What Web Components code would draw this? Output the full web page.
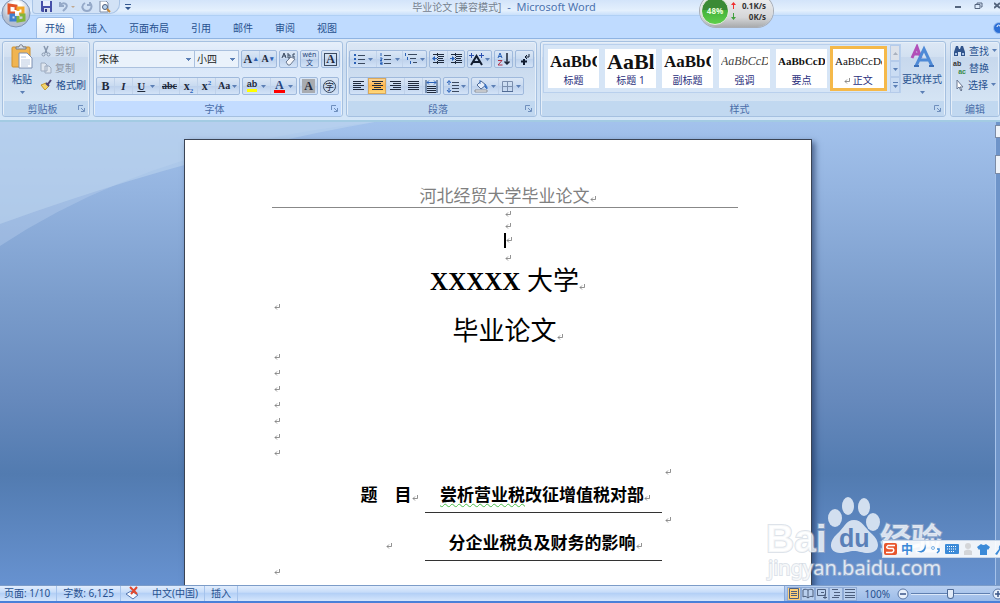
<!DOCTYPE html>
<html lang="zh-CN">
<head>
<meta charset="utf-8">
<title>毕业论文 - Microsoft Word</title>
<style>
	html, body {
		margin: 0;
		height: 100%;
	}

	body {
		overflow: hidden;
		font-family: "Noto Sans", "Noto Sans CJK SC", sans-serif;
		font-size: 10px;
		line-height: 14px;
		color: #27518f;
	}
</style>
</head>
<body>
<word-window></word-window>

<script>
const caret = `<svg class="caret" width="5" height="3" viewBox="0 0 5 3"><path d="M0 0h5L2.5 3z" fill="#5b7fb5"/></svg>`;

/* Line icons share one helper: rows is a list of [x, width] */
function lines(rows, extra = "") {
	let bars = rows.map(([x, w], i) => `<rect x="${x}" y="${1 + i * 2}" width="${w}" height="1"/>`).join("");
	return `<svg width="13" height="12" viewBox="0 0 13 12" fill="#1f2a3c">${bars}${extra}</svg>`;
}

const icons = {
	left: lines([[1, 11], [1, 8], [1, 11], [1, 8], [1, 11]]),
	center: lines([[1, 11], [3, 7], [1, 11], [3, 7], [1, 11]]),
	right: lines([[1, 11], [4, 8], [1, 11], [4, 8], [1, 11]]),
	justify: lines([[1, 11], [1, 11], [1, 11], [1, 11], [1, 11]]),
	spread: `<svg width="13" height="13" viewBox="0 0 13 13"><path d="M1 0v13M12 0v13" stroke="#27456f"/><path d="M2 2.5h9M4 .5l-2 2 2 2M9 .5l2 2-2 2" fill="none" stroke="#2b62b8"/><path d="M2 6.5h9M2 8.5h9M2 10.5h9M2 12.5h9" stroke="#1f2a3c"/></svg>`,
	bullets: `<svg width="13" height="12" viewBox="0 0 13 12"><path d="M5 2.5h7M5 6.5h7M5 10.5h7" stroke="#3b4a60"/><path d="M1 1h2v2H1zM1 5h2v2H1zM1 9h2v2H1z" fill="#2b62b8"/></svg>`,
	numbers: `<svg width="13" height="12" viewBox="0 0 13 12"><path d="M5 2.5h7M5 6.5h7M5 10.5h7" stroke="#3b4a60"/><path d="M2 0v3M1 5h2v1l-2 1.5h2M1 9h2v3H1M1 10.5h2" stroke="#2b62b8" fill="none"/></svg>`,
	multilevel: `<svg width="14" height="12" viewBox="0 0 14 12"><path d="M4 1.5h9M6 5.5h6M9 9.5h4" stroke="#3b4a60"/><path d="M1.5 0v3M3.5 4v3M6.5 8v3" stroke="#2b62b8"/></svg>`,
	outdent: `<svg width="13" height="12" viewBox="0 0 13 12"><path d="M1 1.5h11M6 3.5h6M6 5.5h5M6 7.5h6M1 9.5h11" stroke="#1f2a3c"/><path d="M0 5.5l3-2.500v2h2v1H3v2z" fill="#2b62b8"/><path d="M5.5 0v12" stroke="#1f2a3c" stroke-dasharray="1 1"/></svg>`,
	indent: `<svg width="13" height="12" viewBox="0 0 13 12"><path d="M1 1.5h11M6 3.5h6M6 5.5h5M6 7.5h6M1 9.5h11" stroke="#1f2a3c"/><path d="M5 5.5L2 3v2H0v1h2v2z" fill="#2b62b8"/><path d="M5.5 0v12" stroke="#1f2a3c" stroke-dasharray="1 1"/></svg>`,
	layout: `<svg width="15" height="13" viewBox="0 0 15 13"><path d="M2 12l5.5-9L13 12M4 9h7" fill="none" stroke="#111c30" stroke-width="2"/><path d="M0 2.5h5M2.5 0v5M10 2.5h5M12.5 0v5" stroke="#2b50b0"/></svg>`,
	sort: `<svg width="14" height="14" viewBox="0 0 14 14"><path d="M1 6l2-5 2 5M2 4.5h3" fill="none" stroke="#2b62b8"/><path d="M1 8.5h4l-4 4.5h4.5" fill="none" stroke="#b03048"/><path d="M10 1v11M7.5 9.5L10 12l2.5-2.5" fill="none" stroke="#1b2436" stroke-width="1.5"/></svg>`,
	marks: `<svg width="13" height="13" viewBox="0 0 13 13"><path d="M11 1v3H7M9 2L7 4l2 2" fill="none" stroke="#111c30"/><path d="M6 6v6M3 8.5h6" stroke="#111c30" stroke-width="2"/></svg>`,
	spacing: `<svg width="14" height="13" viewBox="0 0 14 13"><path d="M6 2.5h7M6 5.5h7M6 8.5h7M6 11.5h7" stroke="#3b4a60"/><path d="M3 1v4M3 8v4M1 3l2-2.500L5 3M1 10l2 2.500L5 10" fill="none" stroke="#2b62b8"/></svg>`,
	bucket: `<svg width="14" height="14" viewBox="0 0 14 14"><path d="M1 11h12v2H1z" fill="#fff" stroke="#8b8f96"/><path d="M3 6l4-4 5 4-5 4z" fill="#e6eefa" stroke="#506a94"/><path d="M6 5V1M11 5l2 3v2l-2-2z" fill="#3c74c4" stroke="#3c74c4"/></svg>`,
	border: `<svg width="13" height="13" viewBox="0 0 13 13"><path d="M1.5 1.5h10v10h-10zM6.5 1v11M1 6.5h11" fill="none" stroke="#7b8fae"/><path d="M1 11.5h11" stroke="#506a94"/></svg>`,
	eraser: `<svg width="15" height="14" viewBox="0 0 15 14"><path d="M1 6l2-5 2 5M2 4h3M7 1v5M7 3h2v3H7M14 2h-2v3h2" fill="none" stroke="#39485f"/><path d="M5 10l5-5 4 2-5 6H7z" fill="#f3f5f9" stroke="#6d7c93"/></svg>`,
	highlight: `<svg width="9" height="12" viewBox="0 0 9 12"><path d="M8 1L3 7l-2 1 1-3" fill="none" stroke="#6d7c93" stroke-width="2"/></svg>`,
	scissors: `<svg width="12" height="12" viewBox="0 0 12 12"><path d="M4 1l3 7M8 1L5 8" stroke="#8797ad" stroke-width="1.5"/><circle cx="3.5" cy="9.5" r="1.5" fill="none" stroke="#8797ad"/><circle cx="8.5" cy="9.5" r="1.5" fill="none" stroke="#8797ad"/></svg>`,
	copy: `<svg width="12" height="12" viewBox="0 0 12 12"><path d="M1 1h4l2 2v6H1zM5 4h4l2 2v5H5z" fill="#dfe6ef" stroke="#9dabc0"/></svg>`,
	brush: `<svg width="13" height="12" viewBox="0 0 13 12"><path d="M1 6l5-2 3 3-4 4z" fill="#f2d36a" stroke="#c69a2e"/><path d="M6 4l3 3M8 5l3-4" stroke="#4c4376" stroke-width="2"/></svg>`,
	binoculars: `<svg width="13" height="12" viewBox="0 0 13 12"><path d="M3 1h2l1 3h1l1-3h2l2 6v4H8V7H5v4H1V7z" fill="#31548c"/><path d="M2 8h2v2H2zM9 8h2v2H9z" fill="#a9c3e8"/></svg>`,
	pointer: `<svg width="12" height="12" viewBox="0 0 12 12"><path d="M4 1v9l2-2 2 4 1-1-2-3h3z" fill="#fff" stroke="#6a7892"/></svg>`,
	paste: `<svg width="22" height="26" viewBox="0 0 22 26"><rect x="1" y="3" width="18" height="20" rx="1" fill="#f0b450" stroke="#d0902c"/><path d="M5 5V3h3c0-3 4-3 4 0h3v2z" fill="#d8dde5" stroke="#727c8c"/><path d="M8 9h8l5 5v10H8z" fill="#fff" stroke="#7d90b2"/><path d="M10 13h5M10 16h9M10 18h9M10 20h9M10 22h7" stroke="#b8c8e0"/></svg>`,
	change: `<svg width="24" height="24" viewBox="0 0 24 24"><path d="M2 14L7 3l4 11M3 10h7" fill="none" stroke="#b14fb8" stroke-width="3"/><path d="M6 22l8-17 8 17M9 16h10" fill="none" stroke="#4f8ad6" stroke-width="3"/><path d="M4 22h5M19 22h5" stroke="#3c6fb8" stroke-width="2"/></svg>`
};

/* Attach an open shadow root filled from a template */
function fill(host, html) {
	let template = document.createElement("template");
	template.innerHTML = html;
	host.attachShadow({ mode: "open" });
	host.shadowRoot.appendChild(template.content.cloneNode(true));
}

class ToolButton extends HTMLElement {
	constructor() {
		super();
		let icon = icons[this.getAttribute("icon")] || "";
		let drop = this.hasAttribute("drop") ? caret : "";
		fill(this, `
			<style>
				:host {
					display: flex;
					flex: none;
				}

				button {
					display: flex;
					flex: 1;
					align-items: center;
					justify-content: space-evenly;
					min-width: 0;
					padding: 0;
					border: none;
					background: none;
					color: #1f2a3c;
					font: bold 12px/14px "Liberation Serif", "Noto Sans CJK SC", serif;
				}

				:host([active]) button {
					background: linear-gradient(#fbd9a0, #fdb44b 50%, #ffdf83);
					box-shadow: inset 0 0 0 1px #d9a85b;
				}
			</style>
			<button type="button">${icon}<slot></slot>${drop}</button>
		`);
		this.style.width = this.getAttribute("w") + "px";
	}
}

/* Bordered strip that holds a run of tool buttons */
class ButtonSet extends HTMLElement {
	constructor() {
		super();
		fill(this, `
			<style>
				:host {
					display: flex;
					flex: none;
					height: 16px;
					border: 1px solid #9fb9dc;
					border-radius: 2px;
					background: linear-gradient(#dbe7f6, #c8daf0 50%, #bdd1ec 51%, #d3e3f7);
				}

				::slotted(tool-button:not(:first-child)) {
					border-left: 1px solid #c0d2ea;
					box-sizing: border-box;
				}
			</style>
			<slot></slot>
		`);
	}
}

/* Icon and caption side by side, used in the narrow columns */
class LabelButton extends HTMLElement {
	constructor() {
		super();
		let drop = this.hasAttribute("drop") ? caret : "";
		let icon = icons[this.getAttribute("icon")] || `<span class="swap">ab<i>ac</i></span>`;
		fill(this, `
			<style>
				:host {
					display: block;
				}

				button {
					display: flex;
					align-items: center;
					gap: 3px;
					height: 17px;
					padding: 0;
					border: none;
					background: none;
					color: #27518f;
					font: inherit;
					white-space: nowrap;
				}

				:host([off]) button {
					color: #8d96a5;
				}

				.swap {
					width: 13px;
					font: bold 7px/8px "Liberation Sans", sans-serif;
					color: #333;
					text-align: left;
				}

				.swap i {
					display: block;
					font-style: normal;
					text-align: right;
					color: #3a8a4a;
				}
			</style>
			<button type="button">${icon}<slot></slot>${drop}</button>
		`);
	}
}

/* Large button: picture, caption, arrow */
class BigButton extends HTMLElement {
	constructor() {
		super();
		fill(this, `
			<style>
				:host {
					display: block;
				}

				button {
					display: flex;
					flex-direction: column;
					align-items: center;
					height: 52px;
					padding: 0;
					border: none;
					background: none;
					color: #27518f;
					font: inherit;
					white-space: nowrap;
				}

				.picture {
					display: flex;
					height: 26px;
				}

				.text {
					margin: 2px 0 5px;
				}
			</style>
			<button type="button">
				<span class="picture">${icons[this.getAttribute("icon")]}</span>
				<span class="text"><slot></slot></span>
				${caret}
			</button>
		`);
	}
}

class RibbonGroup extends HTMLElement {
	constructor() {
		super();
		let launcher = this.hasAttribute("launcher")
			? `<svg width="7" height="7" viewBox="0 0 7 7"><path d="M.5 5V.5H5M3 3l3 3M6.5 3v3.5H3" fill="none" stroke="#6f8fbd"/></svg>` : "";
		fill(this, `
			<style>
				:host {
					display: flex;
					flex-direction: column;
					flex: none;
					box-sizing: border-box;
					border: 1px solid #a5c0e0;
					border-radius: 3px;
					background: linear-gradient(#dde8f5, #d2e0f1 20%, #c7d8ed 21%, #d9e8f6);
					box-shadow: inset 0 0 0 1px #e6eff9;
				}

				:host([light]) {
					background: linear-gradient(#e6effb, #d9e6f7 20%, #d8e6f8 21%, #e4f0fd);
				}

				.body {
					flex: 1;
					display: flex;
					padding: 0 2px;
				}

				footer {
					display: flex;
					align-items: center;
					height: 15px;
					margin: 0 1px;
					padding: 0 3px;
					background: #c1d8f0;
					color: #4a6ea9;
				}

				:host([light]) footer {
					background: #c3dcff;
				}

				footer span {
					flex: 1;
					text-align: center;
				}
			</style>
			<div class="body"><slot></slot></div>
			<footer><span>${this.getAttribute("label")}</span>${launcher}</footer>
		`);
	}
}

class StyleTile extends HTMLElement {
	constructor() {
		super();
		fill(this, `
			<style>
				:host {
					display: block;
					flex: 0 0 51px;
					min-width: 0;
				}

				button {
					display: flex;
					flex-direction: column;
					width: 100%;
					height: 39px;
					padding: 0 2px;
					border: none;
					background: #fff;
					color: #2b2f7c;
					font: inherit;
				}

				:host([chosen]) button {
					outline: 3px solid #f5b94a;
				}

				.sample {
					width: 100%;
					height: 25px;
					overflow: hidden;
					white-space: nowrap;
					text-align: left;
					color: #111;
					line-height: 25px;
				}

				.name {
					width: 100%;
					text-align: center;
					line-height: 12px;
				}
			</style>
			<button type="button">
				<span class="sample"><slot name="sample"></slot></span>
				<span class="name"><slot></slot></span>
			</button>
		`);
	}
}

class TitleBar extends HTMLElement {
	constructor() {
		super();
		fill(this, `
			<style>
				:host {
					display: flex;
					position: relative;
					height: 16px;
					padding-left: 8px;
					background: linear-gradient(#d3e4fa, #e4f0fd 70%, #c9e0fb);
					border-bottom: 1px solid #b0d0f5;
					box-sizing: border-box;
				}

				.side {
					flex: 1;
					display: flex;
				}

				h1 {
					margin: 0;
					font-size: 11px;
					font-weight: normal;
					line-height: 13px;
					color: #4d74b0;
				}

				h1 span {
					font-size: 10px;
					color: #75818f;
				}

				.quick {
					display: flex;
					align-items: center;
					gap: 5px;
					height: 13px;
					margin-left: 24px;
					padding: 0 8px 0 7px;
					border: 1px solid #a9c4e6;
					border-top: none;
					border-radius: 0 0 10px 4px;
					background: #d2e2f6;
				}

				button {
					display: flex;
					padding: 0;
					border: none;
					background: none;
				}

				.more {
					margin: 4px 0 0 5px;
					height: 6px;
				}

				.window {
					justify-content: flex-end;
					gap: 11px;
				}

				/* The round menu button hangs over the tab row */
				.office {
					position: absolute;
					left: 1px;
					top: -2px;
				}
			</style>
			<div class="side">
				<div class="quick">
					<button type="button" aria-label="保存"><svg width="13" height="12" viewBox="0 0 13 12"><path d="M1 0h11v11H2L1 10z" fill="#4650a8"/><path d="M3 0h7v5H3z" fill="#e9effb"/><path d="M4 7h6v4H4z" fill="#d5dcec"/><path d="M5 8h2v3H5z" fill="#333c80"/></svg></button>
					<button type="button" aria-label="撤消"><svg width="18" height="12" viewBox="0 0 18 12"><path d="M2 1v4h4M2 5c3-5 9-2 6 2L5 10" fill="none" stroke="#95a9c8" stroke-width="2"/><path d="M13 5h4l-2 2z" fill="#c0a890"/></svg></button>
					<button type="button" aria-label="重复"><svg width="12" height="12" viewBox="0 0 12 12"><path d="M4 2c-5 3-2 8 2 8s6-5 3-8M9 1v3H6" fill="none" stroke="#95a9c8" stroke-width="2"/></svg></button>
					<button type="button" aria-label="打印预览"><svg width="13" height="12" viewBox="0 0 13 12"><path d="M2 0h6l2 2v9H2z" fill="#fff" stroke="#7c8da8"/><circle cx="7" cy="6" r="2.5" fill="#b8d4f0" stroke="#4e5f7c"/><path d="M9 8l3 3" stroke="#c48a3c" stroke-width="2"/></svg></button>
				</div>
				<button type="button" class="more" aria-label="自定义"><svg width="6" height="6" viewBox="0 0 6 6"><path d="M0 0h6v1H0zM0 3h6L3 6z" fill="#35588f"/></svg></button>
			</div>
			<h1><span>毕业论文 [兼容模式]</span> &nbsp;-&nbsp; Microsoft Word</h1>
			<div class="side window">
				<button type="button" aria-label="最小化"><svg width="9" height="12" viewBox="0 0 9 12"><path d="M1 7h6" stroke="#54657e" stroke-width="2"/></svg></button>
				<button type="button" aria-label="还原"><svg width="9" height="12" viewBox="0 0 9 12"><path d="M3 5V3h5v4H7M1 4.5h5v4H1z" fill="none" stroke="#54657e"/></svg></button>
				<button type="button" aria-label="关闭"><svg width="6" height="12" viewBox="0 0 6 12"><path d="M0 3l6 5M0 8l6-5" stroke="#54657e" stroke-width="2"/></svg></button>
			</div>
			<button type="button" class="office" aria-label="Office 按钮">
				<svg width="30" height="30" viewBox="0 0 30 30">
					<defs><radialGradient id="g" cy=".3"><stop offset=".4" stop-color="#fff"/><stop offset="1" stop-color="#b5bfd0"/></radialGradient></defs>
					<circle cx="15" cy="15" r="14" fill="url(#g)" stroke="#7d93b5"/>
					<g fill="none" stroke-width="3">
						<path d="M15 12V8l-7-1v8h6" stroke="#e2562a"/>
						<path d="M17 13v-3h5v6h-4" stroke="#f2a728"/>
						<path d="M14 17h-4v5h5v-4" stroke="#3f7fd0"/>
						<path d="M17 18v5l6-1v-5h-4" stroke="#83b53c"/>
					</g>
				</svg>
			</button>
		`);
	}
}

class TabBar extends HTMLElement {
	constructor() {
		super();
		let names = ["开始", "插入", "页面布局", "引用", "邮件", "审阅", "视图"];
		fill(this, `
			<style>
				:host {
					display: flex;
					align-items: flex-end;
					gap: 6px;
					height: 22px;
					padding-left: 37px;
					background: #bfdbff;
				}

				button {
					height: 20px;
					padding: 0 8px;
					border: none;
					background: none;
					color: #27518f;
					font: inherit;
				}

				.on {
					border-radius: 3px 3px 0 0;
					background: linear-gradient(#fff, #e4eefb);
					box-shadow: 0 0 0 1px #9cbce6;
					clip-path: inset(-1px -1px 0);
				}

				.help {
					display: flex;
					align-items: center;
					width: 7px;
					margin-left: auto;
					padding: 0;
				}
			</style>
			${names.map((name, i) => `<button type="button" class="${i ? "" : "on"}">${name}</button>`).join("")}
			<button type="button" class="help" aria-label="帮助"><svg width="7" height="12" viewBox="0 0 7 12"><circle cx="6" cy="6" r="5.5" fill="#2c6fd6" stroke="#9dc0f0"/><path d="M4 5c0-3 4-2 3 0" fill="none" stroke="#fff"/></svg></button>
		`);
	}
}

class RibbonPanel extends HTMLElement {
	constructor() {
		super();
		fill(this, `
			<style>
				:host {
					display: flex;
					gap: 3px;
					height: 84px;
					padding: 2px 0 3px 2px;
					box-sizing: border-box;
					border-top: 1px solid #8fb4e3;
					border-bottom: 2px solid #a3cbe3;
					background: linear-gradient(#dce8f6, #cadbef 30%, #d4e6f8);
					overflow: hidden;
				}

				.rows {
					display: flex;
					flex-direction: column;
					gap: 9px;
					padding-top: 8px;
				}

				.row {
					display: flex;
					gap: 2px;
				}

				.combos {
					display: flex;
				}

				select {
					appearance: none;
					height: 18px;
					padding: 0 2px;
					border: 1px solid #abc1de;
					border-radius: 0;
					background: #eaf2fb conic-gradient(from -45deg at 50% 100%, #5b7fb5 90deg, transparent 0) no-repeat right 3px center / 5px 3px;
					color: #222;
					font: inherit;
				}

				.face {
					width: 99px;
				}

				.size {
					width: 44px;
					border-left: none;
				}

				.clip {
					display: flex;
					gap: 7px;
					width: 82px;
				}

				.column {
					display: flex;
					flex-direction: column;
				}

				.big {
					padding: 2px 0 0 6px;
				}

				.grow {
					flex: 1;
					min-width: 404px;
				}

				.edit {
					margin-left: 1px;
				}

				.gallery {
					display: flex;
					gap: 6px;
					height: 39px;
					margin-top: 2px;
					padding: 4px 0 4px 4px;
					border: 1px solid #b9d0ed;
					background: #d6e5f6;
				}

				.scroll {
					display: flex;
					flex-direction: column;
					margin-top: -4px;
				}

				.scroll button {
					display: flex;
					align-items: center;
					justify-content: center;
					flex: none;
					box-sizing: border-box;
					width: 10px;
					height: 16px;
					padding: 0;
					border: 1px solid #b5cbea;
					background: #cadcf3;
				}

				.scroll button:first-child {
					background: #dde2ea;
				}

				.change {
					flex: none;
					margin: auto;
					padding-bottom: 4px;
				}

				u, s, i {
					font-size: 11px;
				}

				s {
					font-size: 10px;
				}

				sub, sup {
					font-size: 7px;
					line-height: 0;
					color: #2b62b8;
				}

				.lit {
					border-bottom: 3px solid #ff0;
					font: bold 9px/9px "Liberation Sans", sans-serif;
				}

				.ink {
					border-bottom: 3px solid #f00;
					line-height: 10px;
					padding: 0 1px;
					color: #27457c;
				}

				.small {
					font-size: 10px;
				}

				.boxed {
					border: 1px solid #3b4a60;
					padding: 0 1px;
					line-height: 11px;
				}

				.shaded {
					background: #a8abb0;
					padding: 0 2px;
					line-height: 14px;
				}

				.ring {
					width: 11px;
					border: 1px solid #39485f;
					border-radius: 50%;
					font: 9px/11px "Noto Sans CJK SC", sans-serif;
				}

				.pinyin {
					font: 7px/8px "Noto Sans", "Noto Sans CJK SC", sans-serif;
					color: #27457c;
				}

				.s17 { font: bold 17px/25px "Liberation Serif", serif; }
				.s22 { font: bold 22px/25px "Liberation Serif", serif; }
				.s12 { font: italic 12px/25px "Liberation Serif", serif; color: #444; }
				.s11 { font: bold 11px/25px "Liberation Serif", serif; }
				.s11n { font: 11px/25px "Liberation Serif", serif; }
			</style>
			<ribbon-group label="剪贴板" launcher>
				<div class="clip">
					<big-button class="big" icon="paste">粘贴</big-button>
					<div class="column">
						<label-button icon="scissors" off>剪切</label-button>
						<label-button icon="copy" off>复制</label-button>
						<label-button icon="brush">格式刷</label-button>
					</div>
				</div>
			</ribbon-group>

			<ribbon-group label="字体" launcher light>
				<div class="rows">
					<div class="row">
						<div class="combos">
							<select class="face" aria-label="字体"><option>宋体</option></select>
							<select class="size" aria-label="字号"><option>小四</option></select>
						</div>
						<button-set>
							<tool-button w="17">A<sup>▴</sup></tool-button>
							<tool-button w="17"><span class="small">A</span><sup>▾</sup></tool-button>
						</button-set>
						<button-set><tool-button w="17" icon="eraser"></tool-button></button-set>
						<button-set><tool-button w="17"><span class="pinyin">wén<br>文</span></tool-button></button-set>
						<button-set><tool-button w="17"><span class="boxed">A</span></tool-button></button-set>
					</div>
					<div class="row">
						<button-set>
							<tool-button w="17">B</tool-button>
							<tool-button w="18"><i>I</i></tool-button>
							<tool-button w="27" drop><u>U</u></tool-button>
							<tool-button w="20"><s>abc</s></tool-button>
							<tool-button w="18"><span>x<sub>2</sub></span></tool-button>
							<tool-button w="18"><span>x<sup>2</sup></span></tool-button>
							<tool-button w="24" drop><span class="small">Aa</span></tool-button>
						</button-set>
						<button-set>
							<tool-button w="27" drop><span class="lit">ab</span></tool-button>
							<tool-button w="26" drop><span class="ink">A</span></tool-button>
						</button-set>
						<button-set><tool-button w="17"><span class="shaded">A</span></tool-button></button-set>
						<button-set><tool-button w="17"><span class="ring">字</span></tool-button></button-set>
					</div>
				</div>
			</ribbon-group>

			<ribbon-group label="段落" launcher>
				<div class="rows">
					<div class="row">
						<button-set>
							<tool-button w="26" icon="bullets" drop></tool-button>
							<tool-button w="26" icon="numbers" drop></tool-button>
							<tool-button w="24" icon="multilevel" drop></tool-button>
						</button-set>
						<button-set>
							<tool-button w="17" icon="outdent"></tool-button>
							<tool-button w="17" icon="indent"></tool-button>
						</button-set>
						<button-set><tool-button w="23" icon="layout" drop></tool-button></button-set>
						<button-set><tool-button w="17" icon="sort"></tool-button></button-set>
						<button-set><tool-button w="17" icon="marks"></tool-button></button-set>
					</div>
					<div class="row">
						<button-set>
							<tool-button w="17" icon="left"></tool-button>
							<tool-button w="19" icon="center" active></tool-button>
							<tool-button w="18" icon="right"></tool-button>
							<tool-button w="18" icon="justify"></tool-button>
							<tool-button w="18" icon="spread"></tool-button>
						</button-set>
						<button-set><tool-button w="24" icon="spacing" drop></tool-button></button-set>
						<button-set>
							<tool-button w="26" icon="bucket" drop></tool-button>
							<tool-button w="25" icon="border" drop></tool-button>
						</button-set>
					</div>
				</div>
			</ribbon-group>

			<ribbon-group class="grow" label="样式" launcher>
				<div class="gallery">
					<style-tile><span slot="sample" class="s17">AaBbC</span>标题</style-tile>
					<style-tile><span slot="sample" class="s22">AaBl</span>标题 1</style-tile>
					<style-tile><span slot="sample" class="s17">AaBbC</span>副标题</style-tile>
					<style-tile><span slot="sample" class="s12">AaBbCcDc</span>强调</style-tile>
					<style-tile><span slot="sample" class="s11">AaBbCcD</span>要点</style-tile>
					<style-tile chosen><span slot="sample" class="s11n">AaBbCcDc</span><para-mark></para-mark> 正文</style-tile>
					<div class="scroll">
						<button type="button" aria-label="上一行"><svg width="5" height="3" viewBox="0 0 5 3"><path d="M0 3h5L2.5 0z" fill="#a9b1be"/></svg></button>
						<button type="button" aria-label="下一行">${caret}</button>
						<button type="button" aria-label="其他"><svg width="5" height="6" viewBox="0 0 5 6"><path d="M0 0h5v1H0zM0 3h5L2.5 6z" fill="#5b7fb5"/></svg></button>
					</div>
				</div>
				<big-button class="change" icon="change">更改样式</big-button>
			</ribbon-group>

			<ribbon-group class="edit" label="编辑">
				<div class="column">
					<label-button icon="binoculars" drop>查找</label-button>
					<label-button>替换</label-button>
					<label-button icon="pointer" drop>选择</label-button>
				</div>
			</ribbon-group>
		`);
	}
}

class ParaMark extends HTMLElement {
	constructor() {
		super();
		fill(this, `
			<style>
				:host {
					display: inline-block;
					width: 6px;
					height: 6px;
					line-height: 0;
				}
			</style>
			<svg width="6" height="6" viewBox="0 0 6 6"><path d="M5.5 0v3.5H1M3 1.5l-2 2 2 2" fill="none" stroke="#777" stroke-width=".8"/></svg>
		`);
	}
}

class DocPage extends HTMLElement {
	constructor() {
		super();
		let blanks = n => "<p><para-mark></para-mark></p>".repeat(n);
		fill(this, `
			<style>
				:host {
					display: block;
					flex: 0 1 628px;
					box-sizing: border-box;
					padding: 47px 73px 40px 87px;
					border: 1px solid #3b4454;
					background: #fff;
					box-shadow: 3px 3px 6px rgba(20, 40, 80, .6);
					color: #000;
					font-family: "Liberation Serif", "Noto Sans CJK SC", serif;
				}

				header {
					height: 20px;
					padding-left: 6px;
					border-bottom: 1px solid #888;
					color: #808080;
					font-size: 17px;
					line-height: 20px;
					text-align: center;
				}

				p, h2 {
					margin: 0;
					height: 16px;
					line-height: 16px;
					font-size: 10px;
				}

				.middle {
					padding-left: 6px;
					text-align: center;
				}

				.tight {
					height: 12px;
					line-height: 12px;
				}

				.tall {
					height: 20px;
					line-height: 20px;
				}

				h2 {
					height: 28px;
					padding-left: 6px;
					font-size: 26px;
					font-weight: normal;
					line-height: 28px;
					text-align: center;
				}

				h2 b {
					font-size: 25px;
				}

				.cursor {
					display: inline-block;
					width: 2px;
					height: 15px;
					background: #000;
					vertical-align: middle;
				}

				.blanks {
					padding: 3px 2px;
				}

				table {
					margin-left: 82px;
					border-collapse: collapse;
				}

				tr {
					height: 48px;
				}

				th, td {
					box-sizing: border-box;
					padding: 0 0 5px;
					font-size: 17px;
					font-weight: bold;
					line-height: 22px;
					text-align: center;
					vertical-align: bottom;
					white-space: nowrap;
				}

				th {
					width: 71px;
				}

				.line {
					width: 237px;
					padding-left: 4px;
					border-bottom: 1px solid #333;
				}

				.end {
					padding: 5px 0 0 3px;
					font-size: 6px;
					line-height: 8px;
					vertical-align: top;
				}

				.wavy {
					text-decoration: underline wavy #4cbf4c 1px;
					text-underline-offset: 2px;
				}
			</style>
			<header>河北经贸大学毕业论文<para-mark></para-mark></header>
			<p class="middle tight"><para-mark></para-mark></p>
			<p class="middle tight"><para-mark></para-mark></p>
			<p class="middle"><span class="cursor"></span><para-mark></para-mark></p>
			<p class="middle tall"><para-mark></para-mark></p>
			<h2><b>XXXXX</b> 大学<para-mark></para-mark></h2>
			<div class="blanks">${blanks(1)}</div>
			<h2>毕业论文<para-mark></para-mark></h2>
			<div class="blanks">${blanks(7)}</div>
			<table>
				<tr>
					<th>题　目<para-mark></para-mark></th>
					<td class="line"><span class="wavy">尝析营业税</span>改征增值税对部<para-mark></para-mark></td>
					<td class="end"><para-mark></para-mark></td>
				</tr>
				<tr>
					<th><para-mark></para-mark></th>
					<td class="line">分企业税负及财务的影响<para-mark></para-mark></td>
					<td class="end"><para-mark></para-mark></td>
				</tr>
			</table>
			<div class="blanks">${blanks(2)}</div>
		`);
	}
}

class WorkSpace extends HTMLElement {
	constructor() {
		super();
		fill(this, `
			<style>
				:host {
					display: flex;
					flex: 1;
					min-height: 0;
					position: relative;
					overflow: hidden;
					background: linear-gradient(#a3c2ec, #94b4e0 15%, #7b9dcc 38%, #6689bc 60%, #527bb0 76%, #6792d0);
				}

				/* Swoosh in the backdrop */
				.swoosh {
					position: absolute;
					left: 0;
					top: 0;
				}

				.canvas {
					position: relative;
					flex: 1;
					display: flex;
					align-items: flex-start;
					justify-content: center;
					padding-top: 17px;
				}

				.scroll {
					position: relative;
					width: 5px;
					background: linear-gradient(90deg, #a5c2ea 1px, #6e94c9 1px);
				}

				.ruler, .thumb {
					box-sizing: border-box;
					height: 13px;
					margin-top: 3px;
					border: 1px solid #7c8ba5;
					border-right: none;
					background: #eef3fa;
				}

				.thumb {
					height: 19px;
					margin-top: 17px;
				}
			</style>
			<svg class="swoosh" width="520" height="130" viewBox="0 0 520 130">
				<path d="M0 0h375Q150 24 0 124z" fill="#b8d0ee" opacity=".4"/>
				<path d="M0 0h375Q200 30 0 102z" fill="#c0d7f0" opacity=".5"/>
			</svg>
			<div class="canvas"><doc-page></doc-page></div>
			<div class="scroll"><div class="ruler"></div><div class="thumb"></div></div>
		`);
	}
}

class StatusBar extends HTMLElement {
	constructor() {
		super();
		let view = (d, on) => `<button type="button" class="view${on ? " on" : ""}" aria-label="视图"><svg width="12" height="11" viewBox="0 0 12 11"><path d="${d}" fill="none" stroke="#4d5f7e"/></svg></button>`;
		fill(this, `
			<style>
				:host {
					display: flex;
					align-items: center;
					height: 18px;
					box-sizing: border-box;
					border-top: 1px solid #7c9cc8;
					border-bottom: 2px solid #4a80d8;
					background: linear-gradient(#e1edfd, #c8ddf9 40%, #b4d0f6 50%, #d5e6fc);
				}

				.item {
					display: flex;
					height: 15px;
					padding: 0 6px;
					line-height: 15px;
					border-right: 1px solid #a5c3ec;
					white-space: nowrap;
				}

				.item:first-of-type {
					padding-left: 4px;
				}

				.lang {
					gap: 12px;
					padding-left: 4px;
				}

				.right {
					display: flex;
					align-items: center;
					height: 100%;
					margin-left: auto;
					padding-left: 2px;
					border-left: 1px solid #8cabd8;
					background: linear-gradient(#b8cff0, #9dbce8);
				}

				button {
					display: flex;
					align-items: center;
					justify-content: center;
					padding: 0;
					border: none;
					background: none;
				}

				.view {
					width: 14px;
					height: 14px;
					border: 1px solid #8fabd6;
					box-sizing: border-box;
					background: #b9cfee;
				}

				.view.on {
					background: #fdcf78;
				}

				.zoom {
					padding: 0 7px 0 8px;
				}

				input {
					appearance: none;
					width: 79px;
					height: 13px;
					margin: 0 2px;
					background: linear-gradient(transparent 6px, #5f7fb0 6px, #5f7fb0 7px, #dbe8fa 7px, #dbe8fa 8px, transparent 8px);
				}

				input::-webkit-slider-thumb {
					appearance: none;
					width: 7px;
					height: 10px;
					border: 1px solid #4d6a98;
					border-radius: 1px 1px 4px 4px;
					background: #e2ebf8;
				}

				.plus {
					width: 8px;
					justify-content: flex-start;
				}
			</style>
			<span class="item">页面: 1/10</span>
			<span class="item">字数: 6,125</span>
			<span class="item lang">
				<svg width="15" height="14" viewBox="0 0 15 14"><path d="M1 8l5-3 7 4-5 4z" fill="#f4f7fc" stroke="#5476b0"/><path d="M5 1l7 7M12 1L6 8" stroke="#e2472c" stroke-width="2"/></svg>
				<span>中文(中国)</span>
			</span>
			<span class="item">插入</span>
			<div class="right">
				${view("M1.5.5h9v10h-9zM3 3.5h6M3 5.5h6M3 7.5h6", true)}
				${view("M6 2v8M6 2C4 1 2 1 1 2v7c1-1 3-1 5 1M6 2c2-1 4-1 5 0v7c-1-1-3-1-5 1")}
				${view("M1.5 1.5h8v6h-8zM5 4.5h3M7 9.5h4M9 6v5")}
				${view("M2 1.5h6M4 4.5h6M4 7.5h6M2 9.5h7")}
				${view("M1 1.5h10M1 4.5h10M1 7.5h10M1 9.5h10")}
				<span class="zoom">100%</span>
				<button type="button" aria-label="缩小"><svg width="12" height="12" viewBox="0 0 12 12"><circle cx="6" cy="6" r="5" fill="#e8f0fb" stroke="#5a77a6"/><path d="M3 6h6" stroke="#3b5688" stroke-width="1.5"/></svg></button>
				<input type="range" min="0" max="100" value="50" aria-label="显示比例">
				<button type="button" class="plus" aria-label="放大"><svg width="8" height="12" viewBox="0 0 8 12"><circle cx="6" cy="6" r="5" fill="#e8f0fb" stroke="#5a77a6"/><path d="M3 6h6M6 3v6" stroke="#3b5688" stroke-width="1.5"/></svg></button>
			</div>
		`);
	}
}

/* Floating network meter */
class SpeedBadge extends HTMLElement {
	constructor() {
		super();
		fill(this, `
			<style>
				:host {
					position: absolute;
					right: 227px;
					top: -5px;
					display: flex;
					align-items: center;
					gap: 2px;
					width: 73px;
					height: 32px;
					border-radius: 16px;
					background: linear-gradient(#f2f2f2, #d5d6d8 70%, #a9abad);
					box-shadow: 0 0 0 1px #a8adb5;
					color: #333;
					font: bold 8px/11px "Open Sans", sans-serif;
				}

				.ball {
					flex: none;
					width: 26px;
					height: 26px;
					margin-left: 1px;
					border: 1px solid #e4ece0;
					border-radius: 50%;
					background: linear-gradient(#3b8a35 45%, #44b13a 46%, #5fd04c);
					color: #eaffdf;
					line-height: 26px;
					text-align: center;
				}

				.rates {
					flex: 1;
					padding-right: 7px;
				}

				.rates div {
					display: flex;
					align-items: center;
					justify-content: space-between;
				}
			</style>
			<span class="ball">48%</span>
			<div class="rates">
				<div><svg width="5" height="7" viewBox="0 0 5 7"><path d="M2.5 0L5 3H3v4H2V3H0z" fill="#f03030"/></svg>0.1K/s</div>
				<div><svg width="5" height="7" viewBox="0 0 5 7"><path d="M2.5 7L0 4h2V0h1v4h2z" fill="#3fa03c"/></svg>0K/s</div>
			</div>
		`);
	}
}

/* Floating input-method bar */
class ImeBar extends HTMLElement {
	constructor() {
		super();
		fill(this, `
			<style>
				:host {
					position: absolute;
					right: 0;
					bottom: 45px;
					display: flex;
					align-items: center;
					gap: 4px;
					width: 116px;
					height: 16px;
					padding-left: 1px;
					overflow: hidden;
					border: 1px solid #c8d6e8;
					border-right: none;
					background: rgba(255, 255, 255, .9);
					color: #3b8ad8;
					font: bold 12px/16px "Noto Sans CJK SC", sans-serif;
				}

				svg {
					flex: none;
				}
			</style>
			<svg width="13" height="12" viewBox="0 0 13 12"><rect width="13" height="12" rx="2" fill="#e8562c"/><path d="M11 2.5H4Q1 5 5 5.5h4Q11 8 8 9.5H2" fill="none" stroke="#fff" stroke-width="1.5"/></svg>
			<span>中</span>
			<svg width="10" height="10" viewBox="0 0 10 10"><path d="M8 0c3 6-3 11-8 7 5 1 8-2 8-7z" fill="#3b8ad8"/></svg>
			<svg width="10" height="10" viewBox="0 0 10 10"><circle cx="2" cy="4" r="1.5" fill="none" stroke="#7fb4e6"/><path d="M6 5h2v2L6 9" fill="none" stroke="#3b8ad8" stroke-width="1.5"/></svg>
			<svg width="14" height="10" viewBox="0 0 14 10"><rect width="14" height="10" rx="1" fill="#3b8ad8"/><path d="M2 2.5h10M2 5h10M4 7.5h6" stroke="#fff" stroke-dasharray="1 1"/></svg>
			<svg width="10" height="12" viewBox="0 0 10 12"><circle cx="5" cy="3" r="3" fill="#d3d5d8"/><path d="M1 12V8q4-3 8 0v4z" fill="#d3d5d8"/></svg>
			<svg width="13" height="11" viewBox="0 0 13 11"><path d="M4 0q2.500 2 5 0l4 3-2 3-1-1v6H3V5L2 6 0 3z" fill="#3b8ad8"/></svg>
			<svg width="8" height="12" viewBox="0 0 8 12"><path d="M1 11l4-5q-1-4 3-5v6H6l-3 5z" fill="#3b8ad8"/></svg>
		`);
	}
}

class WaterMark extends HTMLElement {
	constructor() {
		super();
		fill(this, `
			<style>
				:host {
					position: absolute;
					right: 50px;
					bottom: 17px;
					line-height: 0;
					pointer-events: none;
				}

				text {
					fill: #fff;
					fill-opacity: .75;
					stroke: #b4bfd0;
					stroke-opacity: .45;
					paint-order: stroke;
					stroke-width: 2px;
				}

				.latin { font: bold 39px "Liberation Sans", sans-serif; }
				.han { font: bold 31px "Noto Sans CJK SC", sans-serif; }
				.site { font: 20px "Noto Sans", sans-serif; }
				.du { font: bold 25px "Liberation Sans", sans-serif; fill: #5a80b8; fill-opacity: 1; stroke: none; }
			</style>
			<svg width="185" height="90" viewBox="0 0 185 90">
				<text class="latin" x="1" y="56">Bai</text>
				<g fill="#dde7f4" opacity=".92">
					<ellipse cx="70" cy="22" rx="7" ry="9"/>
					<ellipse cx="83" cy="10" rx="6" ry="9"/>
					<ellipse cx="99" cy="11" rx="6" ry="9"/>
					<ellipse cx="108" cy="26" rx="7" ry="9"/>
					<path d="M89 24c8 0 11 8 18 14 9 8 8 19-4 19-6 0-9-2-14-2s-8 2-14 2c-11 0-12-11-3-19 7-6 9-14 17-14z"/>
				</g>
				<text class="du" x="74" y="51">du</text>
				<text class="han" x="115" y="54">经验</text>
				<text class="site" x="3" y="79">jingyan.baidu.com</text>
			</svg>
		`);
	}
}

class WordWindow extends HTMLElement {
	constructor() {
		super();
		fill(this, `
			<style>
				:host {
					display: flex;
					flex-direction: column;
					position: relative;
					height: 100vh;
					overflow: hidden;
				}

				title-bar {
					z-index: 1;
				}

				speed-badge {
					z-index: 2;
				}
			</style>
			<title-bar></title-bar>
			<tab-bar></tab-bar>
			<ribbon-panel></ribbon-panel>
			<work-space></work-space>
			<status-bar></status-bar>
			<speed-badge></speed-badge>
			<water-mark></water-mark>
			<ime-bar></ime-bar>
		`);
	}
}

customElements.define("tool-button", ToolButton);
customElements.define("button-set", ButtonSet);
customElements.define("label-button", LabelButton);
customElements.define("big-button", BigButton);
customElements.define("ribbon-group", RibbonGroup);
customElements.define("style-tile", StyleTile);
customElements.define("para-mark", ParaMark);
customElements.define("title-bar", TitleBar);
customElements.define("tab-bar", TabBar);
customElements.define("ribbon-panel", RibbonPanel);
customElements.define("doc-page", DocPage);
customElements.define("work-space", WorkSpace);
customElements.define("status-bar", StatusBar);
customElements.define("speed-badge", SpeedBadge);
customElements.define("ime-bar", ImeBar);
customElements.define("water-mark", WaterMark);
customElements.define("word-window", WordWindow);
</script>
</body>
</html>
